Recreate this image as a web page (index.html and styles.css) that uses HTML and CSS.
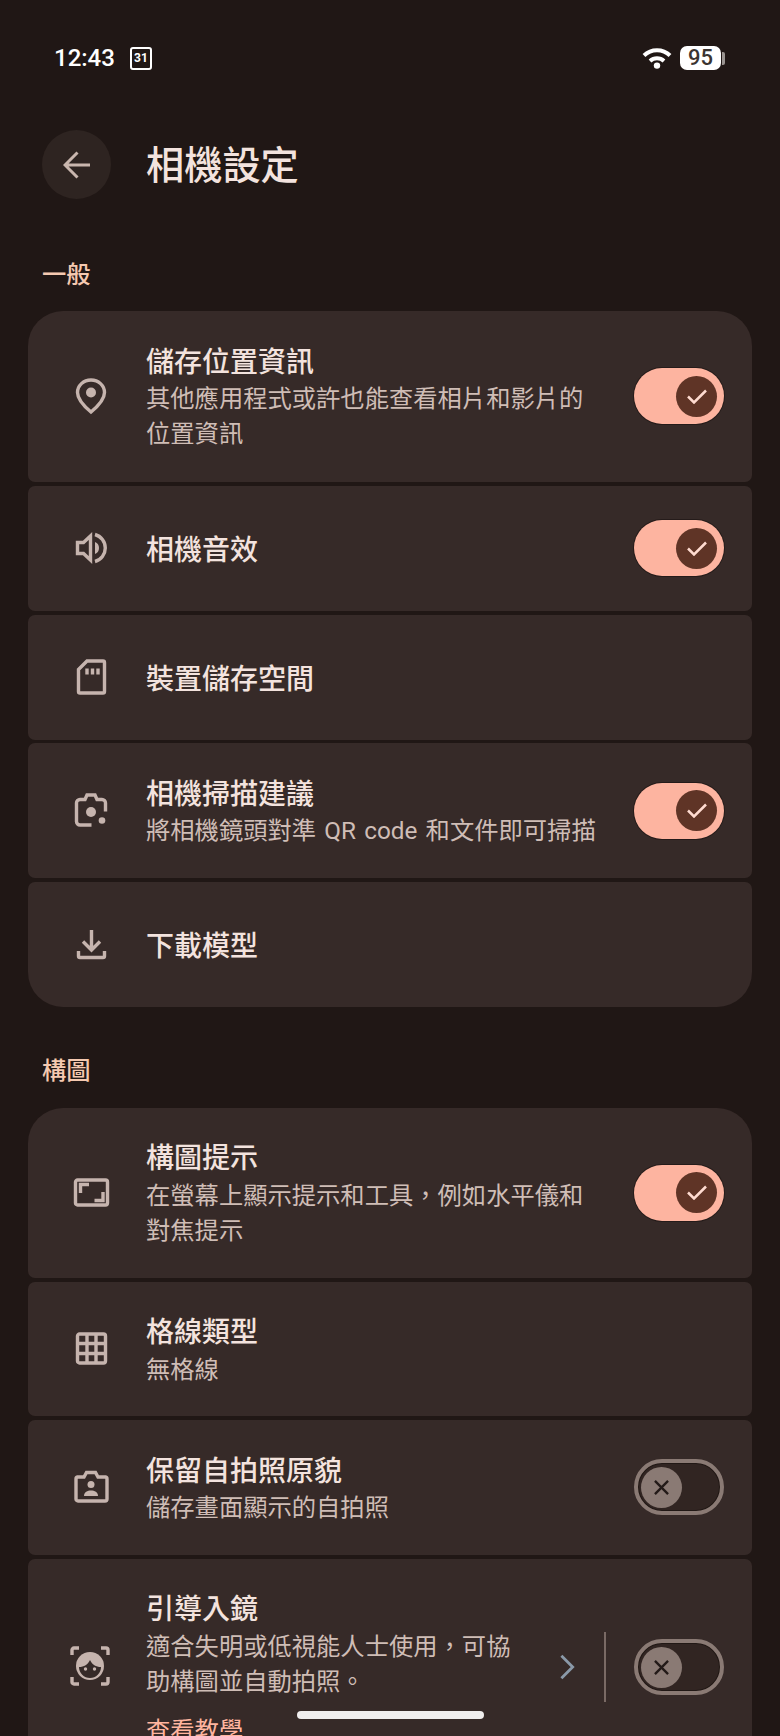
FILE: index.html
```html
<!DOCTYPE html>
<html lang="zh-Hant">
<head>
    <meta charset="UTF-8">
    <meta name="viewport" content="width=device-width, initial-scale=1.0">
    <title>相機設定</title>
    <link rel="stylesheet" href="styles.css">
</head>
<body>
    <div id="screen">
        <div class="status">
            <div class="status-left">
                <span class="time">12:43</span>
                <span class="cal">31</span>
            </div>
            <div class="status-right">
                <svg class="wifi" viewBox="0 0 30 22"><path d="M2 8.500A18.500 18.500 0 0 1 28 8.500M8 14A10.500 10.500 0 0 1 22 14" fill="none" stroke="#fff" stroke-width="4"/><circle cx="15" cy="18.600" r="3.200" fill="#fff"/></svg>
                <span class="batt">95</span>
                <span class="batt-nub"></span>
            </div>
        </div>

        <div class="header">
            <div class="back">
                <svg viewBox="0 0 28 28"><path d="M27 14H3M14.500 1.500L2 14L14.500 26.500" fill="none" stroke="currentColor" stroke-width="3"/></svg>
            </div>
            <h1>相機設定</h1>
        </div>

        <div class="label">一般</div>
        <div class="card">
            <div class="row">
                <svg class="ic" viewBox="0 0 36 36"><path d="M18 2C25.500 2 31.500 7.500 31.500 14.500C31.500 21 24 29 18 34C12 29 4.500 21 4.500 14.500C4.500 7.500 10.500 2 18 2Z"/><circle class="solid" cx="18" cy="14.500" r="5"/></svg>
                <div class="text">
                    <div class="name">儲存位置資訊</div>
                    <div class="sub">其他應用程式或許也能查看相片和影片的位置資訊</div>
                </div>
                <div class="toggle on"><span class="thumb"><svg viewBox="0 0 20 15"><path d="M1 7.500L7 13.500L19 1.500"/></svg></span></div>
            </div>
            <div class="row">
                <svg class="ic" viewBox="0 0 36 36"><path d="M4.500 12.500H10.500L17.500 6V30L10.500 23.500H4.500Z"/><path class="solid" d="M22 12a6.500 6.500 0 0 1 0 12Z"/><path d="M22 4.500a14 14 0 0 1 0 27"/></svg>
                <div class="text"><div class="name">相機音效</div></div>
                <div class="toggle on"><span class="thumb"><svg viewBox="0 0 20 15"><path d="M1 7.500L7 13.500L19 1.500"/></svg></span></div>
            </div>
            <div class="row">
                <svg class="ic" viewBox="0 0 36 36"><path d="M14 2H30a1.500 1.500 0 0 1 1.500 1.500V32.500A1.500 1.500 0 0 1 30 34H7A1.500 1.500 0 0 1 5.500 32.500V10.500Z"/><path d="M14 9.500V15.500M19.500 9.500V15.500M25 9.500V15.500"/></svg>
                <div class="text"><div class="name">裝置儲存空間</div></div>
            </div>
            <div class="row">
                <svg class="ic" viewBox="0 0 36 36"><path d="M18.500 32H7A3.500 3.500 0 0 1 3.500 28.500V10A3.500 3.500 0 0 1 7 6.500H12L14 2H22L24 6.500H29A3.500 3.500 0 0 1 32.500 10V18.500"/><circle class="solid" cx="18" cy="19" r="5"/><circle class="solid" cx="29" cy="27.500" r="3.300"/></svg>
                <div class="text">
                    <div class="name">相機掃描建議</div>
                    <div class="sub">將相機鏡頭對準 QR code 和文件即可掃描</div>
                </div>
                <div class="toggle on"><span class="thumb"><svg viewBox="0 0 20 15"><path d="M1 7.500L7 13.500L19 1.500"/></svg></span></div>
            </div>
            <div class="row">
                <svg class="ic" viewBox="0 0 36 36"><path d="M18.500 4V23M10 15.500L18.500 24L27 15.500M5.500 25V30A1.500 1.500 0 0 0 7 31.500H30A1.500 1.500 0 0 0 31.500 30V25"/></svg>
                <div class="text"><div class="name">下載模型</div></div>
            </div>
        </div>

        <div class="label second">構圖</div>
        <div class="card compose">
            <div class="row">
                <svg class="ic" viewBox="0 0 36 36"><rect x="2.500" y="5" width="32" height="25" rx="2"/><path d="M7.500 18V9.500H16M21.500 25.500H30V17"/></svg>
                <div class="text">
                    <div class="name">構圖提示</div>
                    <div class="sub">在螢幕上顯示提示和工具，例如水平儀和對焦提示</div>
                </div>
                <div class="toggle on"><span class="thumb"><svg viewBox="0 0 20 15"><path d="M1 7.500L7 13.500L19 1.500"/></svg></span></div>
            </div>
            <div class="row">
                <svg class="ic" viewBox="0 0 36 36"><rect x="4.500" y="3" width="28" height="29" rx="2"/><path d="M14 3V32M23 3V32M4.500 12.500H32.500M4.500 22.500H32.500"/></svg>
                <div class="text">
                    <div class="name">格線類型</div>
                    <div class="sub">無格線</div>
                </div>
            </div>
            <div class="row">
                <svg class="ic" viewBox="0 0 36 36"><path d="M4.500 8H11L13.500 3.500H22.500L25 8H32.500A2 2 0 0 1 34 10V30A2 2 0 0 1 32 32H5A2 2 0 0 1 3 30V10A2 2 0 0 1 4.500 8Z"/><circle class="solid" cx="18" cy="15.500" r="3.500"/><path class="solid" d="M11 27C11 23 14.500 21.500 18 21.500C21.500 21.500 25 23 25 27Z"/></svg>
                <div class="text">
                    <div class="name">保留自拍照原貌</div>
                    <div class="sub">儲存畫面顯示的自拍照</div>
                </div>
                <div class="toggle off"><span class="thumb"><svg viewBox="0 0 16 16"><path d="M1 1L15 15M15 1L1 15"/></svg></span></div>
            </div>
            <div class="row last">
                <svg class="ic" viewBox="0 0 36 36"><path d="M-1 6V1A2 2 0 0 1 1-1H6M28-1H33A2 2 0 0 1 35 1V6M35 28V33A2 2 0 0 1 33 35H28M6 35H1A2 2 0 0 1-1 33V28"/><circle class="solid" cx="17" cy="17" r="14"/><path class="face" d="M6 18C11 18 15 15.500 17 11C19 15.500 23 18 28 18A11 11 0 0 1 6 18Z"/><circle class="solid" cx="12.500" cy="20" r="1.700"/><circle class="solid" cx="21.500" cy="20" r="1.700"/></svg>
                <div class="text">
                    <div class="name">引導入鏡</div>
                    <div class="sub">適合失明或低視能人士使用，可協助構圖並自動拍照。</div>
                    <div class="link">查看教學</div>
                </div>
                <svg class="chev" viewBox="0 0 16 27"><path d="M1.500 1.500L13.500 13.500L1.500 25.500"/></svg>
                <span class="divider"></span>
                <div class="toggle off"><span class="thumb"><svg viewBox="0 0 16 16"><path d="M1 1L15 15M15 1L1 15"/></svg></span></div>
            </div>
        </div>

        <div class="homebar"></div>
    </div>
</body>
</html>
```
FILE: styles.css
```css
html, body{
    margin: 0;
    padding: 0;
    background-color: #201715;
}
#screen{
    width: 780px;
    height: 1736px;
    position: relative;
    overflow: hidden;
    font-family: Roboto, "Noto Sans CJK TC", sans-serif;
    color: #f1e0da;
}

/* status bar */
.status{
    display: flex;
    justify-content: space-between;
    padding: 46px 55px 0 54px;
    height: 24px;
}
.status-left, .status-right{
    display: flex;
    align-items: center;
}
.time{
    font-size: 24px;
    font-weight: 500;
    color: #fff;
}
.cal{
    width: 18px;
    height: 19px;
    margin-left: 15px;
    border: 2px solid #fff;
    border-radius: 3px;
    font-size: 12px;
    font-weight: 700;
    line-height: 19px;
    text-align: center;
    color: #fff;
}
.wifi{
    width: 30px;
    height: 22px;
    margin-right: 8px;
}
.batt{
    width: 41px;
    height: 24px;
    border-radius: 7px;
    background-color: #fff;
    color: #3a3431;
    font-size: 22px;
    font-weight: 500;
    line-height: 24px;
    text-align: center;
}
.batt-nub{
    width: 3px;
    height: 13px;
    margin-left: 1px;
    border-radius: 0 2px 2px 0;
    background-color: #9a9491;
}

/* title */
.header{
    display: flex;
    align-items: center;
    gap: 35px;
    margin-top: 60px;
    padding-left: 42px;
}
.back{
    width: 69px;
    height: 69px;
    border-radius: 50%;
    background-color: #2e2421;
    color: #c9b6ae;
    display: flex;
    align-items: center;
    justify-content: center;
}
.back svg{
    width: 28px;
    height: 28px;
}
h1{
    margin: 0;
    padding-bottom: 4px;
    font-size: 38.200px;
    font-weight: 500;
    color: #f3e3de;
}

.label{
    margin: 58px 0 19px 42px;
    font-size: 24.300px;
    font-weight: 500;
    line-height: 35px;
    color: #f5c9b0;
}
.label.second{
    margin-top: 46px;
    margin-bottom: 20px;
}

/* list */
.card{
    display: flex;
    flex-direction: column;
    gap: 3.750px;
    margin: 0 28px;
}
.row{
    display: flex;
    align-items: center;
    min-height: 125px;
    box-sizing: border-box;
    padding: 30px 28px 30px 44.500px;
    background-color: #362a28;
    border-radius: 7px;
}
.row:first-child{
    border-radius: 35px 35px 7px 7px;
    padding-bottom: 31px;
}
.compose .row:first-child{
    padding-bottom: 30px;
}
.row:last-child{
    border-radius: 7px 7px 35px 35px;
}
.row.last{
    border-radius: 7px;
    padding-bottom: 29px;
}
.ic{
    width: 36px;
    height: 36px;
    flex: none;
    margin-right: 37.500px;
    overflow: visible;
    fill: none;
    stroke: #c6b4ae;
    stroke-width: 3.400;
}
.ic .solid{
    fill: #c6b4ae;
    stroke: none;
}
.ic .face{
    fill: #362a28;
    stroke: none;
}
.text{
    flex: 1;
    min-width: 0;
    margin: 2.500px 29px -2.500px 0;
}
.name{
    font-size: 28px;
    font-weight: 500;
    line-height: 40px;
    color: #f3e3de;
}
/* 부제목이 있으면 글자가 살짝 위로 */
.name:not(:last-child){
    margin: -1px 0 -1.500px 0;
}
.sub{
    padding-bottom: 1.800px;
    font-size: 24.300px;
    line-height: 35.400px;
    word-spacing: 2.200px;
    color: #cfbdb6;
}
.link{
    margin-top: 12px;
    font-size: 24.300px;
    line-height: 35px;
    color: #ffb59f;
}

/* switches */
.toggle{
    width: 90px;
    height: 56px;
    flex: none;
    box-sizing: border-box;
    border-radius: 28px;
    display: flex;
    align-items: center;
}
.toggle.on{
    justify-content: flex-end;
    padding: 0 7px;
    background-color: #fdb4a0;
    box-shadow: 0 0 0 1px rgba(27, 18, 16, 0.6);
}
.toggle.off{
    padding: 0 3px;
    border: 4px solid #8a7a74;
    background-color: #312522;
    box-shadow: inset 0 0 0 1px #211815;
}
.thumb{
    width: 41px;
    height: 41px;
    border-radius: 50%;
    display: flex;
    align-items: center;
    justify-content: center;
}
.on .thumb{
    background-color: #5f3426;
}
.off .thumb{
    background-color: #8a7a74;
}
.on .thumb svg{
    width: 20px;
    height: 15px;
    fill: none;
    stroke: #ffdbd0;
    stroke-width: 2.500;
}
.off .thumb svg{
    width: 15px;
    height: 15px;
    fill: none;
    stroke: #231a18;
    stroke-width: 2.500;
}

.chev{
    width: 15px;
    height: 26px;
    flex: none;
    margin-right: 29px;
    fill: none;
    stroke: #8a99a8;
    stroke-width: 3;
}
.divider{
    width: 2px;
    height: 70px;
    flex: none;
    margin-right: 28px;
    background-color: #7a6a65;
}

.homebar{
    position: absolute;
    left: 297px;
    top: 1711px;
    width: 187px;
    height: 8px;
    border-radius: 4px;
    background-color: #f0eeee;
}
```
